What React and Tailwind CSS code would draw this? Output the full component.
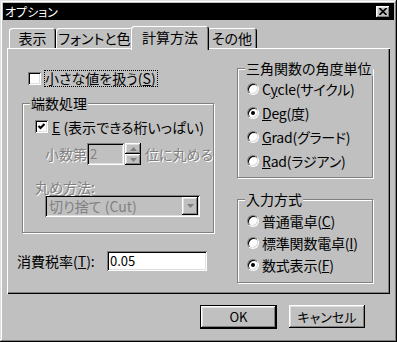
import React from 'react';

const raised = 'shadow-[inset_-1px_-1px_#000,inset_1px_1px_#fff,inset_-2px_-2px_#808080,inset_2px_2px_#dfdfdf]';

const Checkbox = ({ checked }) => (
    <div className='w-[13px] h-[13px] shrink-0 bg-white shadow-[inset_1px_1px_#808080,inset_-1px_-1px_#fff,inset_2px_2px_#000,inset_-2px_-2px_#dfdfdf] flex items-center justify-center'>
        {checked && (
            <svg width='9' height='9' viewBox='0 0 9 9'>
                <path d='M1.5 4 L3.5 6 L7.5 2' stroke='#000' strokeWidth='2' fill='none' />
            </svg>
        )}
    </div>
);

const Radio = ({ checked }) => (
    <div className='w-[12px] h-[12px] shrink-0 rounded-full border border-t-[#808080] border-l-[#808080] border-r-white border-b-white'>
        <div className='w-full h-full rounded-full bg-white shadow-[inset_1px_1px_#000,inset_-1px_-1px_#dfdfdf] flex items-center justify-center'>
            {checked && <div className='w-[4px] h-[4px] rounded-full bg-black' />}
        </div>
    </div>
);

const GroupBox = ({ label, className, children }) => (
    <div className={`relative border border-[#808080] shadow-[inset_1px_1px_#fff,1px_1px_#fff] ${className}`}>
        <span className='absolute -top-[9px] left-[7px] px-[1px] bg-[#c0c0c0] leading-[16px] whitespace-nowrap'>{label}</span>
        {children}
    </div>
);

const Tab = ({ width, active, children }) => (
    <div
        className={`${width} flex items-center justify-center whitespace-nowrap rounded-t-[3px] bg-[#c0c0c0] shadow-[inset_1px_1px_#fff,inset_-1px_0_#000,inset_-2px_0_#808080] ${
            active ? 'relative z-10 h-[24px] -mb-[2px] -mx-[2px] pb-[2px]' : 'h-[20px]'
        }`}
    >
        {children}
    </div>
);

const RadioRow = ({ checked, height, children }) => (
    <div className={`${height} flex items-center gap-[3px]`}>
        <Radio checked={checked} />
        <span className='leading-[16px] whitespace-nowrap tracking-[-0.2px]'>{children}</span>
    </div>
);

const Spin = () => (
    <div className='w-[16px] h-[22px] flex flex-col'>
        {[0, 1].map(i => (
            <div key={i} className={`h-[11px] flex items-center justify-center ${raised}`}>
                <svg width='7' height='4' viewBox='0 0 7 4'>
                    <path d={i === 0 ? 'M3.5 0 L7 4 L0 4 Z' : 'M0 0 L7 0 L3.5 4 Z'} fill='#808080' />
                </svg>
            </div>
        ))}
    </div>
);

const App = () => {
    return (
        <div className="w-[397px] h-[342px] bg-[#c0c0c0] p-[3px] flex flex-col text-[14px] text-black whitespace-nowrap [font-family:'Noto_Sans_CJK_JP','Liberation_Sans',sans-serif] [font-feature-settings:'palt'] shadow-[inset_-1px_-1px_#000,inset_1px_1px_#dfdfdf,inset_-2px_-2px_#808080,inset_2px_2px_#fff]">
            {/* Title bar */}
            <div className='h-[17px] bg-black flex items-center justify-between pl-[2px] pr-[4px]'>
                <span className='text-white text-[12px] leading-[14px]'>オプション</span>
                <div className={`w-[14px] h-[12px] bg-[#c0c0c0] flex items-center justify-center ${raised}`}>
                    <svg width='8' height='7' viewBox='0 0 8 7'>
                        <path d='M0.5 0 L7.5 7 M7.5 0 L0.5 7' stroke='#000' strokeWidth='1.6' />
                    </svg>
                </div>
            </div>

            {/* Tabs */}
            <div className='mx-[4px] flex flex-col'>
                <div className='h-[28px] flex items-end pl-[2px]'>
                    <Tab width='w-[47px]'>表示</Tab>
                    <Tab width='w-[77px]'>フォントと色</Tab>
                    <Tab width='w-[78px]' active>計算方法</Tab>
                    <Tab width='w-[50px]'>その他</Tab>
                </div>

                <div className='h-[246px] flex pl-[15px] shadow-[inset_1px_1px_#fff,inset_-1px_-1px_#000,inset_-2px_-2px_#808080]'>
                    {/* Left column */}
                    <div className='w-[192px] flex flex-col pt-[21px]'>
                        <div className='h-[18px] flex items-center gap-[3px] pl-[6px]'>
                            <Checkbox />
                            <span className='border border-dotted border-black leading-[15px] pr-[1px]'>
                                小さな値を扱う(<span className='underline'>S</span>)
                            </span>
                        </div>

                        <GroupBox label='端数処理' className='mt-[16px] h-[130px] pl-[12px] pt-[16px]'>
                            <div className='h-[13px] flex items-center gap-[4px]'>
                                <Checkbox checked />
                                <span className='leading-[16px]'>
                                    <span className='underline'>E</span> (表示できる桁いっぱい)
                                </span>
                            </div>
                            <div className='mt-[10px] h-[22px] flex items-center pl-[10px] text-[#808080] [text-shadow:1px_1px_0_#fff]'>
                                <span className='w-[42px] leading-[16px]'>小数第</span>
                                <div className='w-[37px] h-[22px] bg-[#c0c0c0] flex items-center pl-[3px] shadow-[inset_1px_1px_#808080,inset_-1px_-1px_#fff,inset_2px_2px_#000,inset_-2px_-2px_#dfdfdf] [text-shadow:none] text-[13px]'>
                                    2
                                </div>
                                <div className='ml-[1px]'>
                                    <Spin />
                                </div>
                                <span className='ml-[4px] leading-[16px]'>位に丸める</span>
                            </div>
                            <div className='mt-[14px] h-[16px] leading-[16px] text-[#808080] [text-shadow:1px_1px_0_#fff]'>
                                丸め方法:
                            </div>
                            <div className='ml-[10px] w-[155px] h-[22px] flex items-center justify-between pl-[4px] pr-[2px] bg-[#c0c0c0] text-[#808080] shadow-[inset_1px_1px_#808080,inset_-1px_-1px_#fff,inset_2px_2px_#000,inset_-2px_-2px_#dfdfdf]'>
                                <span className='leading-[16px]'>切り捨て (Cut)</span>
                                <div className={`w-[16px] h-[18px] flex items-center justify-center ${raised}`}>
                                    <svg width='7' height='4' viewBox='0 0 7 4'>
                                        <path d='M0 0 L7 0 L3.5 4 Z' fill='#808080' />
                                    </svg>
                                </div>
                            </div>
                        </GroupBox>

                        <div className='mt-[18px] -ml-[5px] h-[20px] flex items-center'>
                            <span className='w-[90px] leading-[16px]'>
                                消費税率(<span className='underline'>T</span>):
                            </span>
                            <div className='w-[100px] h-[20px] bg-white flex items-center pl-[3px] text-[13px] shadow-[inset_1px_1px_#808080,inset_-1px_-1px_#fff,inset_2px_2px_#000,inset_-2px_-2px_#dfdfdf]'>
                                0.05
                            </div>
                        </div>
                    </div>

                    {/* Right column */}
                    <div className='ml-[23px] w-[136px] flex flex-col pt-[20px]'>
                        <GroupBox label='三角関数の角度単位' className='h-[110px] pl-[9px] pt-[8px]'>
                            <RadioRow height='h-[24px]'>C<span className='underline'>y</span>cle(サイクル)</RadioRow>
                            <RadioRow height='h-[24px]' checked><span className='underline'>D</span>eg(度)</RadioRow>
                            <RadioRow height='h-[24px]'><span className='underline'>G</span>rad(グラード)</RadioRow>
                            <RadioRow height='h-[24px]'><span className='underline'>R</span>ad(ラジアン)</RadioRow>
                        </GroupBox>

                        <GroupBox label='入力方式' className='mt-[21px] h-[84px] pl-[9px] pt-[10px]'>
                            <RadioRow height='h-[22px]'>普通電卓(<span className='underline'>C</span>)</RadioRow>
                            <RadioRow height='h-[22px]'>標準関数電卓(<span className='underline'>I</span>)</RadioRow>
                            <RadioRow height='h-[22px]' checked>数式表示(<span className='underline'>F</span>)</RadioRow>
                        </GroupBox>
                    </div>
                </div>
            </div>

            {/* Buttons */}
            <div className='mt-[11px] flex justify-end items-start gap-[12px] pr-[29px] text-[13px]'>
                <div className='w-[77px] h-[24px] border border-black'>
                    <div className={`w-full h-full flex items-center justify-center ${raised}`}>OK</div>
                </div>
                <div className={`w-[76px] h-[23px] flex items-center justify-center ${raised}`}>キャンセル</div>
            </div>
        </div>
    );
};

export default App;
